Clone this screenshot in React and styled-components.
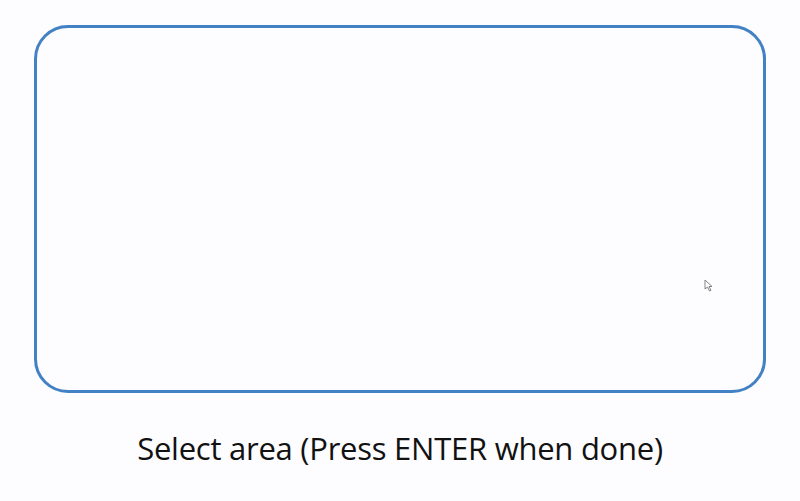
import React from "react";
import styled, { createGlobalStyle } from "styled-components";

const Global = createGlobalStyle`
  html, body { margin: 0; padding: 0; background: #fdfcfe; }
  body { font-family: "Open Sans", "Liberation Sans", sans-serif; }
`;

const Page = styled.div`
  width: 800px;
  height: 501px;
  box-sizing: border-box;
  padding-top: 25px;
  display: flex;
  flex-direction: column;
  align-items: center;
  background: #fdfcfe;
`;

const Frame = styled.div`
  position: relative;
  box-sizing: border-box;
  width: 732px;
  height: 368px;
  border: 3px solid #4281c4;
  border-radius: 34px;
  margin-left: -1px;
`;

const Cursor = styled.svg`
  position: absolute;
  left: 667px;
  top: 251px;
`;

const Caption = styled.div`
  margin-top: 35px;
  font-size: 31px;
  line-height: 40px;
  color: #111;
  letter-spacing: -0.25px;
`;

export default function App() {
  return (
    <>
      <Global />
      <Page>
        <Frame>
          <Cursor width="10" height="14" viewBox="0 0 10 14">
            <path d="M1 1 L1 10 L3.5 8 L5.5 12 L7 11.3 L5 7.5 L8 7.5 Z" fill="#fff" stroke="#777" strokeWidth="0.9" />
          </Cursor>
        </Frame>
        <Caption>Select area (Press ENTER when done)</Caption>
      </Page>
    </>
  );
}
